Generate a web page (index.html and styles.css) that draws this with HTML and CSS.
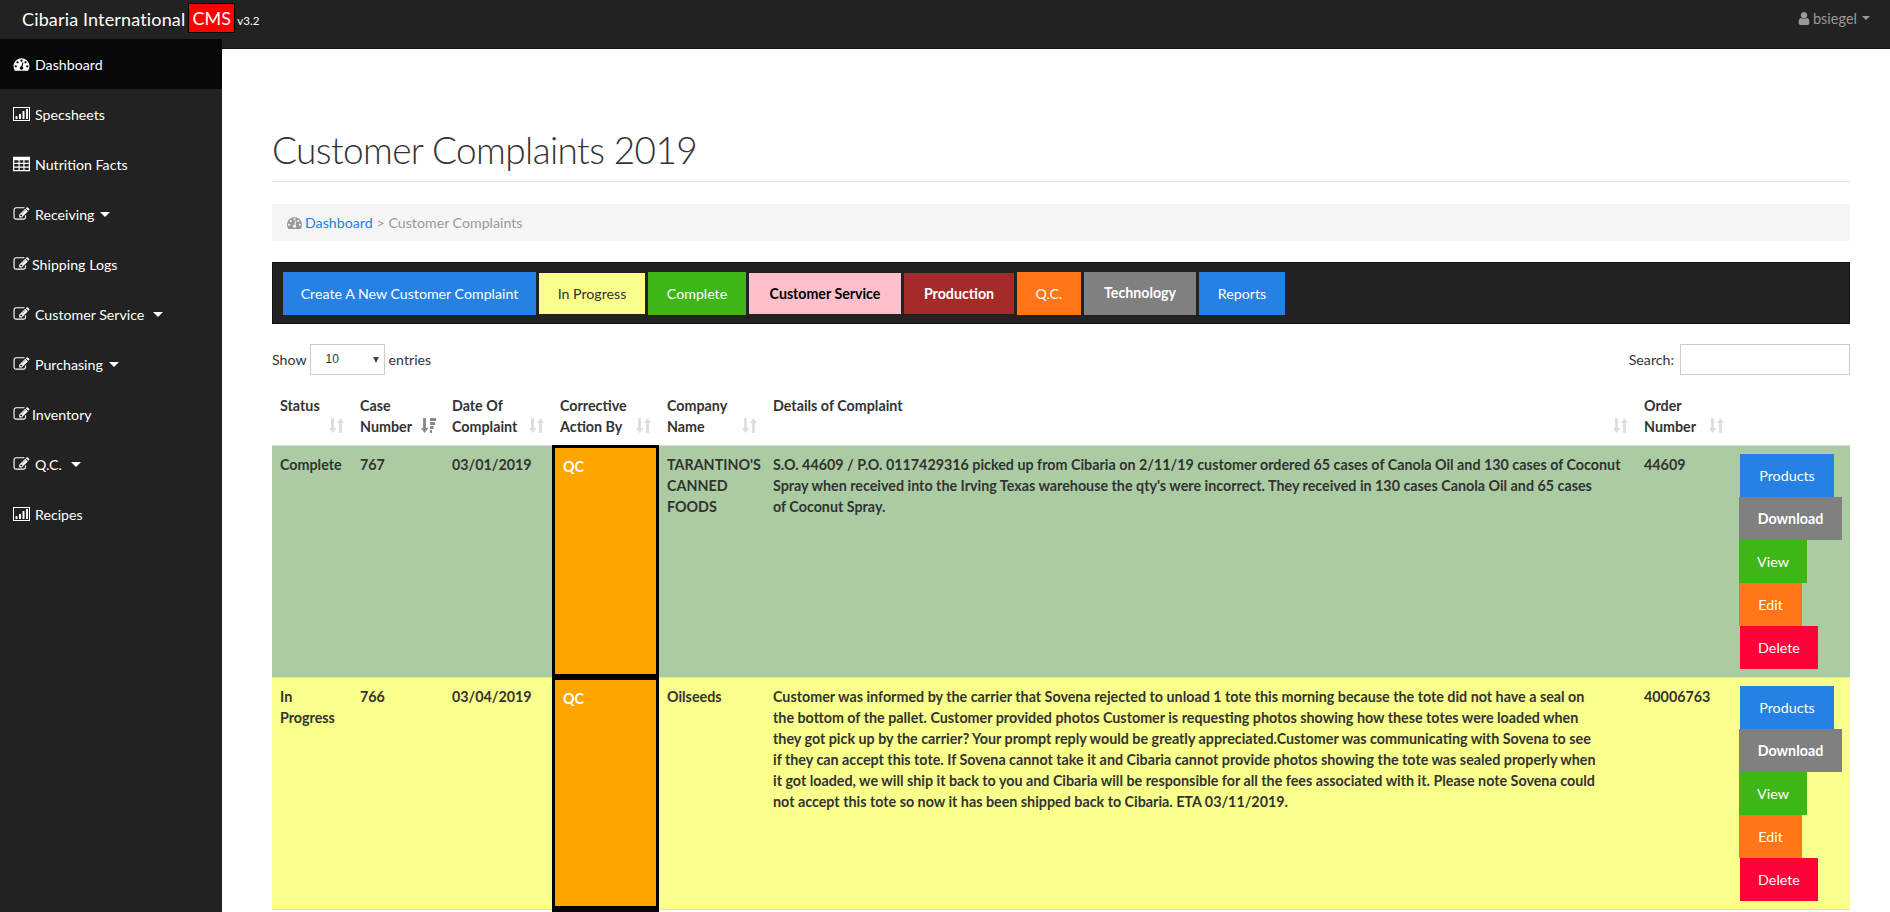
FILE: index.html
```html
<!DOCTYPE html>
<html lang="en">
<head>
<meta charset="utf-8">
<title>Customer Complaints 2019</title>
<link rel="stylesheet" href="styles.css">
</head>
<body>
<svg class="defs" width="0" height="0" aria-hidden="true">
  <symbol id="i-dash" viewBox="0 0 1792 1792"><path d="M384 1152q0-53-37.5-90.5t-90.5-37.5-90.5 37.5-37.5 90.5 37.5 90.5 90.5 37.5 90.5-37.5 37.5-90.5zm192-448q0-53-37.5-90.5t-90.5-37.5-90.5 37.5-37.5 90.5 37.5 90.5 90.5 37.5 90.5-37.5 37.5-90.5zm428 481l101-382q6-26-7.5-48.5t-38.5-29.5-48 6.5-30 39.5l-101 382q-60 5-107 43.5t-63 98.5q-20 77 20 146t117 89 146-20 89-117q16-60-6-117t-72-91zm660-33q0-53-37.5-90.5t-90.5-37.5-90.5 37.5-37.5 90.5 37.5 90.5 90.5 37.5 90.5-37.5 37.5-90.5zm-640-640q0-53-37.5-90.5t-90.5-37.5-90.5 37.5-37.5 90.5 37.5 90.5 90.5 37.5 90.5-37.5 37.5-90.5zm448 192q0-53-37.5-90.5t-90.5-37.5-90.5 37.5-37.5 90.5 37.5 90.5 90.5 37.5 90.5-37.5 37.5-90.5zm320 448q0 261-141 483-19 29-54 29h-1402q-35 0-54-29-141-221-141-483 0-182 71-348t191-286 286-191 348-71 348 71 286 191 191 286 71 348z"/></symbol>
  <symbol id="i-chart" viewBox="0 0 17 14"><path fill-rule="evenodd" d="M0 0h17v14H0zM1 1v12h15V1z"/><path d="M2.500 9h2v3h-2zM6 7h2v5H6zM9.500 4h2v8h-2zM13 2h2v10h-2z"/></symbol>
  <symbol id="i-table" viewBox="0 0 14 12"><path fill-rule="evenodd" d="M0 0h14v12H0zM1 3v2h3.500V3zM5.500 3v2h3V3zM9.500 3v2H13V3zM1 6v2h3.500V6zM5.500 6v2h3V6zM9.500 6v2H13V6zM1 9v2h3.500V9zM5.500 9v2h3V9zM9.500 9v2H13V9z"/></symbol>
  <symbol id="i-edit" viewBox="0 0 1792 1792"><path d="M888 1184l116-116-152-152-116 116v56h96v96h56zm440-720q-16-16-33 1l-350 350q-17 17-1 33t33-1l350-350q17-17 1-33zm80 594v190q0 119-84.500 203.500t-203.500 84.500h-832q-119 0-203.500-84.500t-84.500-203.500v-832q0-119 84.500-203.500t203.500-84.500h832q63 0 117 25 15 7 18 23 3 17-9 29l-49 49q-14 14-32 8-23-6-45-6h-832q-66 0-113 47t-47 113v832q0 66 47 113t113 47h832q66 0 113-47t47-113v-126q0-13 9-22l64-64q15-15 35-7t20 29zm-96-738l288 288-672 672h-288v-288zm444 132l-92 92-288-288 92-92q28-28 68-28t68 28l152 152q28 28 28 68t-28 68z"/></symbol>
  <symbol id="i-user" viewBox="256 128 1280 1536"><path d="M1536 1399q0 109-62.500 187t-150.500 78h-854q-88 0-150.500-78t-62.500-187q0-85 8.500-160.500t31.500-152 58.500-131 94-89 134.500-34.500q131 128 313 128t313-128q76 0 134.500 34.500t94 89 58.500 131 31.500 152 8.500 160.500zm-256-887q0 159-112.500 271.500t-271.500 112.500-271.500-112.500-112.500-271.500 112.500-271.500 271.500-112.500 271.500 112.500 112.500 271.500z"/></symbol>
  <symbol id="i-sort" viewBox="0 0 15 15"><path d="M2.100 0h2.800v10H7.500L3.500 15 0 10h2.100zM10.100 15h2.800V5H15L11.500 0 8 5h2.100z"/></symbol>
  <symbol id="i-sort-on" viewBox="0 0 15 15"><path d="M2.100 0h2.800v10H7.500L3.500 15 0 10h2.100z"/><path d="M9 0h6v3H9zM9 4h5v3H9zM9 8h3.500v3H9zM9 12h2v3H9z"/></symbol>
</svg>

<header class="navbar">
  <div class="brand"><span>Cibaria International</span><span class="badge">CMS</span><small class="version">v3.2</small></div>
  <div class="account">
    <svg class="user-icon"><use href="#i-user"/></svg>
    <span>bsiegel</span>
    <span class="caret caret-muted"></span>
  </div>
</header>

<div class="shell">
  <nav class="sidebar">
    <a class="nav-item active"><svg class="ico"><use href="#i-dash"/></svg><span>Dashboard</span></a>
    <a class="nav-item"><svg class="ico"><use href="#i-chart"/></svg><span>Specsheets</span></a>
    <a class="nav-item"><svg class="ico"><use href="#i-table"/></svg><span>Nutrition Facts</span></a>
    <a class="nav-item"><svg class="ico"><use href="#i-edit"/></svg><span>Receiving</span><span class="caret"></span></a>
    <a class="nav-item tight"><svg class="ico"><use href="#i-edit"/></svg><span>Shipping Logs</span></a>
    <a class="nav-item"><svg class="ico"><use href="#i-edit"/></svg><span>Customer Service</span><span class="caret wide"></span></a>
    <a class="nav-item"><svg class="ico"><use href="#i-edit"/></svg><span>Purchasing</span><span class="caret"></span></a>
    <a class="nav-item tight"><svg class="ico"><use href="#i-edit"/></svg><span>Inventory</span></a>
    <a class="nav-item"><svg class="ico"><use href="#i-edit"/></svg><span>Q.C.</span><span class="caret wide"></span></a>
    <a class="nav-item"><svg class="ico"><use href="#i-chart"/></svg><span>Recipes</span></a>
  </nav>

  <main class="content">
    <h1 class="page-title">Customer Complaints 2019</h1>

    <div class="breadcrumb">
      <svg class="crumb-icon"><use href="#i-dash"/></svg>
      <a class="crumb-link">Dashboard</a>
      <span>&gt; Customer Complaints</span>
    </div>

    <div class="toolbar">
      <a class="btn tb-create blue">Create A New Customer Complaint</a>
      <a class="btn short tb-progress yellow">In Progress</a>
      <a class="btn tb-complete green">Complete</a>
      <a class="btn short tb-service pink">Customer Service</a>
      <a class="btn short tb-production brown">Production</a>
      <a class="btn tb-qc orange">Q.C.</a>
      <a class="btn tb-tech gray">Technology</a>
      <a class="btn tb-reports blue">Reports</a>
    </div>

    <div class="table-controls">
      <div class="length"><span>Show</span><span class="fake-select"><span>10</span><span class="select-arrow"></span></span><span>entries</span></div>
      <label class="search"><span>Search:</span><input class="search-input" type="text"></label>
    </div>

    <table class="complaints">
      <colgroup>
        <col class="c-status"><col class="c-case"><col class="c-date"><col class="c-action">
        <col class="c-company"><col class="c-details"><col class="c-order"><col class="c-buttons">
      </colgroup>
      <thead>
        <tr>
          <th>Status<svg class="sort"><use href="#i-sort"/></svg></th>
          <th>Case<br>Number<svg class="sort on"><use href="#i-sort-on"/></svg></th>
          <th>Date Of<br>Complaint<svg class="sort"><use href="#i-sort"/></svg></th>
          <th>Corrective<br>Action By<svg class="sort"><use href="#i-sort"/></svg></th>
          <th>Company<br>Name<svg class="sort"><use href="#i-sort"/></svg></th>
          <th>Details of Complaint<svg class="sort"><use href="#i-sort"/></svg></th>
          <th>Order<br>Number<svg class="sort"><use href="#i-sort"/></svg></th>
          <th></th>
        </tr>
      </thead>
      <tbody>
        <tr class="row-complete">
          <td>Complete</td>
          <td>767</td>
          <td>03/01/2019</td>
          <td class="qc">QC</td>
          <td>TARANTINO'S<br>CANNED<br>FOODS</td>
          <td>S.O. 44609 / P.O. 0117429316 picked up from Cibaria on 2/11/19 customer ordered 65 cases of Canola Oil and 130 cases of Coconut<br>Spray when received into the Irving Texas warehouse the qty's were incorrect. They received in 130 cases Canola Oil and 65 cases<br>of Coconut Spray.</td>
          <td>44609</td>
          <td>
            <div class="actions">
              <a class="btn a-products blue">Products</a>
              <a class="btn a-download gray">Download</a>
              <a class="btn a-view green">View</a>
              <a class="btn a-edit orange">Edit</a>
              <a class="btn a-delete red">Delete</a>
            </div>
          </td>
        </tr>
        <tr class="row-progress">
          <td>In<br>Progress</td>
          <td>766</td>
          <td>03/04/2019</td>
          <td class="qc">QC</td>
          <td>Oilseeds</td>
          <td>Customer was informed by the carrier that Sovena rejected to unload 1 tote this morning because the tote did not have a seal on<br>the bottom of the pallet. Customer provided photos Customer is requesting photos showing how these totes were loaded when<br>they got pick up by the carrier? Your prompt reply would be greatly appreciated.Customer was communicating with Sovena to see<br>if they can accept this tote. If Sovena cannot take it and Cibaria cannot provide photos showing the tote was sealed properly when<br>it got loaded, we will ship it back to you and Cibaria will be responsible for all the fees associated with it. Please note Sovena could<br>not accept this tote so now it has been shipped back to Cibaria. ETA 03/11/2019.</td>
          <td>40006763</td>
          <td>
            <div class="actions">
              <a class="btn a-products blue">Products</a>
              <a class="btn a-download gray">Download</a>
              <a class="btn a-view green">View</a>
              <a class="btn a-edit orange">Edit</a>
              <a class="btn a-delete red">Delete</a>
            </div>
          </td>
        </tr>
        <tr>
          <td></td><td></td><td></td><td class="qc"></td><td></td><td></td><td></td><td></td>
        </tr>
      </tbody>
    </table>
  </main>
</div>
</body>
</html>
```
FILE: styles.css
```css
* { box-sizing: border-box; }
html, body { height: 100%; }
body {
  margin: 0;
  overflow: hidden;
  display: flex;
  flex-direction: column;
  font-family: "Lato", "Liberation Sans", sans-serif;
  font-size: 14.2px;
  line-height: 21px;
  color: #333;
  background: #fff;
}
.defs { position: absolute; }

/* top bar */
.navbar {
  flex: 0 0 49px;
  display: flex;
  justify-content: space-between;
  background: #222;
  border-bottom: 1px solid #121212;
  padding-left: 22px;
  padding-right: 20px;
}
.brand {
  display: flex;
  align-items: flex-start;
  color: #fff;
  font-size: 18px;
  line-height: 38px;
  letter-spacing: 0.15px;
}
.badge {
  margin: 3px 0 0 3px;
  width: 47px;
  height: 30px;
  text-align: center;
  background: #f00;
  border: 1px solid #000;
  line-height: 28px;
  letter-spacing: 0;
}
.version {
  font-size: 11.5px;
  line-height: 42px;
  margin-left: 2px;
  letter-spacing: 0;
}
.account {
  display: flex;
  align-items: center;
  height: 36px;
  color: #999;
  font-size: 14.5px;
}
.user-icon { width: 12px; height: 13px; fill: #999; margin-right: 3px; }
.caret {
  display: inline-block;
  margin-left: 6px;
  border-top: 5px solid #fff;
  border-left: 5px solid transparent;
  border-right: 5px solid transparent;
}
.caret.wide { margin-left: 9px; }
.caret-muted { border-top-color: #999; margin-left: 5px; border-left-width: 4px; border-right-width: 4px; border-top-width: 4px; }

/* page frame */
.shell { flex: 1; display: flex; min-height: 0; }
.sidebar {
  flex: 0 0 222px;
  margin-top: -10px;
  padding-bottom: 10px;
  background: #222;
  position: relative;
}
.nav-item {
  display: flex;
  align-items: center;
  height: 50px;
  padding-left: 13px;
  color: #fff;
}
.nav-item.active { background: #080808; }
.ico { width: 17px; height: 16px; fill: #fff; margin-right: 5px; flex: none; }
.nav-item.tight .ico { margin-right: 2px; }
.content { flex: 1; min-width: 0; padding: 86px 40px 0 50px; }

.page-title {
  margin: 0;
  height: 47px;
  border-bottom: 1px solid #e6e6e6;
  font-size: 37px;
  line-height: 30px;
  letter-spacing: -0.6px;
  font-weight: 300;
  color: #333;
}
.breadcrumb {
  display: flex;
  align-items: center;
  height: 37px;
  margin-top: 22px;
  padding-left: 15px;
  background: #f5f5f5;
  color: #999;
}
.crumb-icon { width: 15px; height: 15px; fill: #999; margin-right: 3px; }
.crumb-link { color: #2780e3; margin-right: 4px; }

/* button bar */
.toolbar {
  display: flex;
  align-items: center;
  height: 62px;
  margin-top: 21px;
  padding-left: 10px;
  gap: 3px;
  background: #222;
  border: 1px solid #111;
}
.btn {
  display: block;
  height: 43px;
  line-height: 43px;
  text-align: center;
  color: #fff;
  white-space: nowrap;
}
.short { height: 41px; line-height: 41px; }
.blue { background: #2780e3; }
.yellow { background: #f9ff8a; color: #333; }
.green { background: #3fb618; }
.pink { background: #ffc0cb; color: #000; font-weight: 700; }
.brown { background: #a52a2a; font-weight: 700; }
.orange { background: #ff7518; }
.gray { background: #808080; font-weight: 700; }
.red { background: #ff0039; }
.tb-create { width: 253px; }
.tb-progress { width: 106px; }
.tb-complete { width: 98px; }
.tb-service { width: 152px; }
.tb-production { width: 110px; }
.tb-qc { width: 64px; }
.tb-tech { width: 112px; line-height: 41px; }
.tb-reports { width: 86px; }

/* table controls */
.table-controls {
  display: flex;
  justify-content: space-between;
  margin-top: 20px;
  height: 43px;
}
.length, .search { display: flex; align-items: flex-start; line-height: 31px; }
.fake-select {
  display: flex;
  align-items: center;
  justify-content: space-between;
  width: 75px;
  height: 31px;
  margin: 0 4px 0 3px;
  padding: 0 5px 0 15px;
  border: 1px solid #ccc;
  font-size: 12px;
  font-family: "Liberation Sans", sans-serif;
  color: #333;
}
.select-arrow {
  border-top: 6px solid #444;
  border-left: 3px solid transparent;
  border-right: 3px solid transparent;
}
.search-input {
  width: 170px;
  height: 31px;
  margin: 0 0 0 6px;
  border: 1px solid #ccc;
  background: #fff;
}

/* table */
.complaints {
  width: 100%;
  table-layout: fixed;
  border-collapse: separate;
  border-spacing: 0;
}
.c-status { width: 80px; }
.c-case { width: 92px; }
.c-date { width: 108px; }
.c-action { width: 107px; }
.c-company { width: 106px; }
.c-details { width: 871px; }
.c-order { width: 96px; }
.c-buttons { width: 118px; }
.complaints th {
  position: relative;
  padding: 8px;
  text-align: left;
  vertical-align: top;
  height: 57px;
  font-size: 14.3px;
  font-weight: 700;
}
.sort {
  position: absolute;
  right: 8px;
  bottom: 12px;
  width: 15px;
  height: 15px;
  fill: #ddd;
}
.sort.on { fill: #888; }
.complaints td {
  padding: 8px;
  vertical-align: top;
  border-top: 1px solid #ddd;
  font-size: 14.3px;
  font-weight: 700;
  color: #333;
}
.row-complete td { background: #abcca2; }
.row-progress td { background: #f9ff8a; }
.complaints td.qc {
  border: 3px solid #000;
  background: #ffa500;
  color: #fff;
}
.actions { display: flex; flex-direction: column; align-items: flex-start; }
.actions .btn { font-weight: 400; }
.actions .a-download { font-weight: 700; }
.a-products { width: 94px; }
.a-download { width: 103px; margin-left: -1px; }
.a-view { width: 68px; margin-left: -1px; }
.a-edit { width: 63px; margin-left: -1px; }
.a-delete { width: 78px; }
```
